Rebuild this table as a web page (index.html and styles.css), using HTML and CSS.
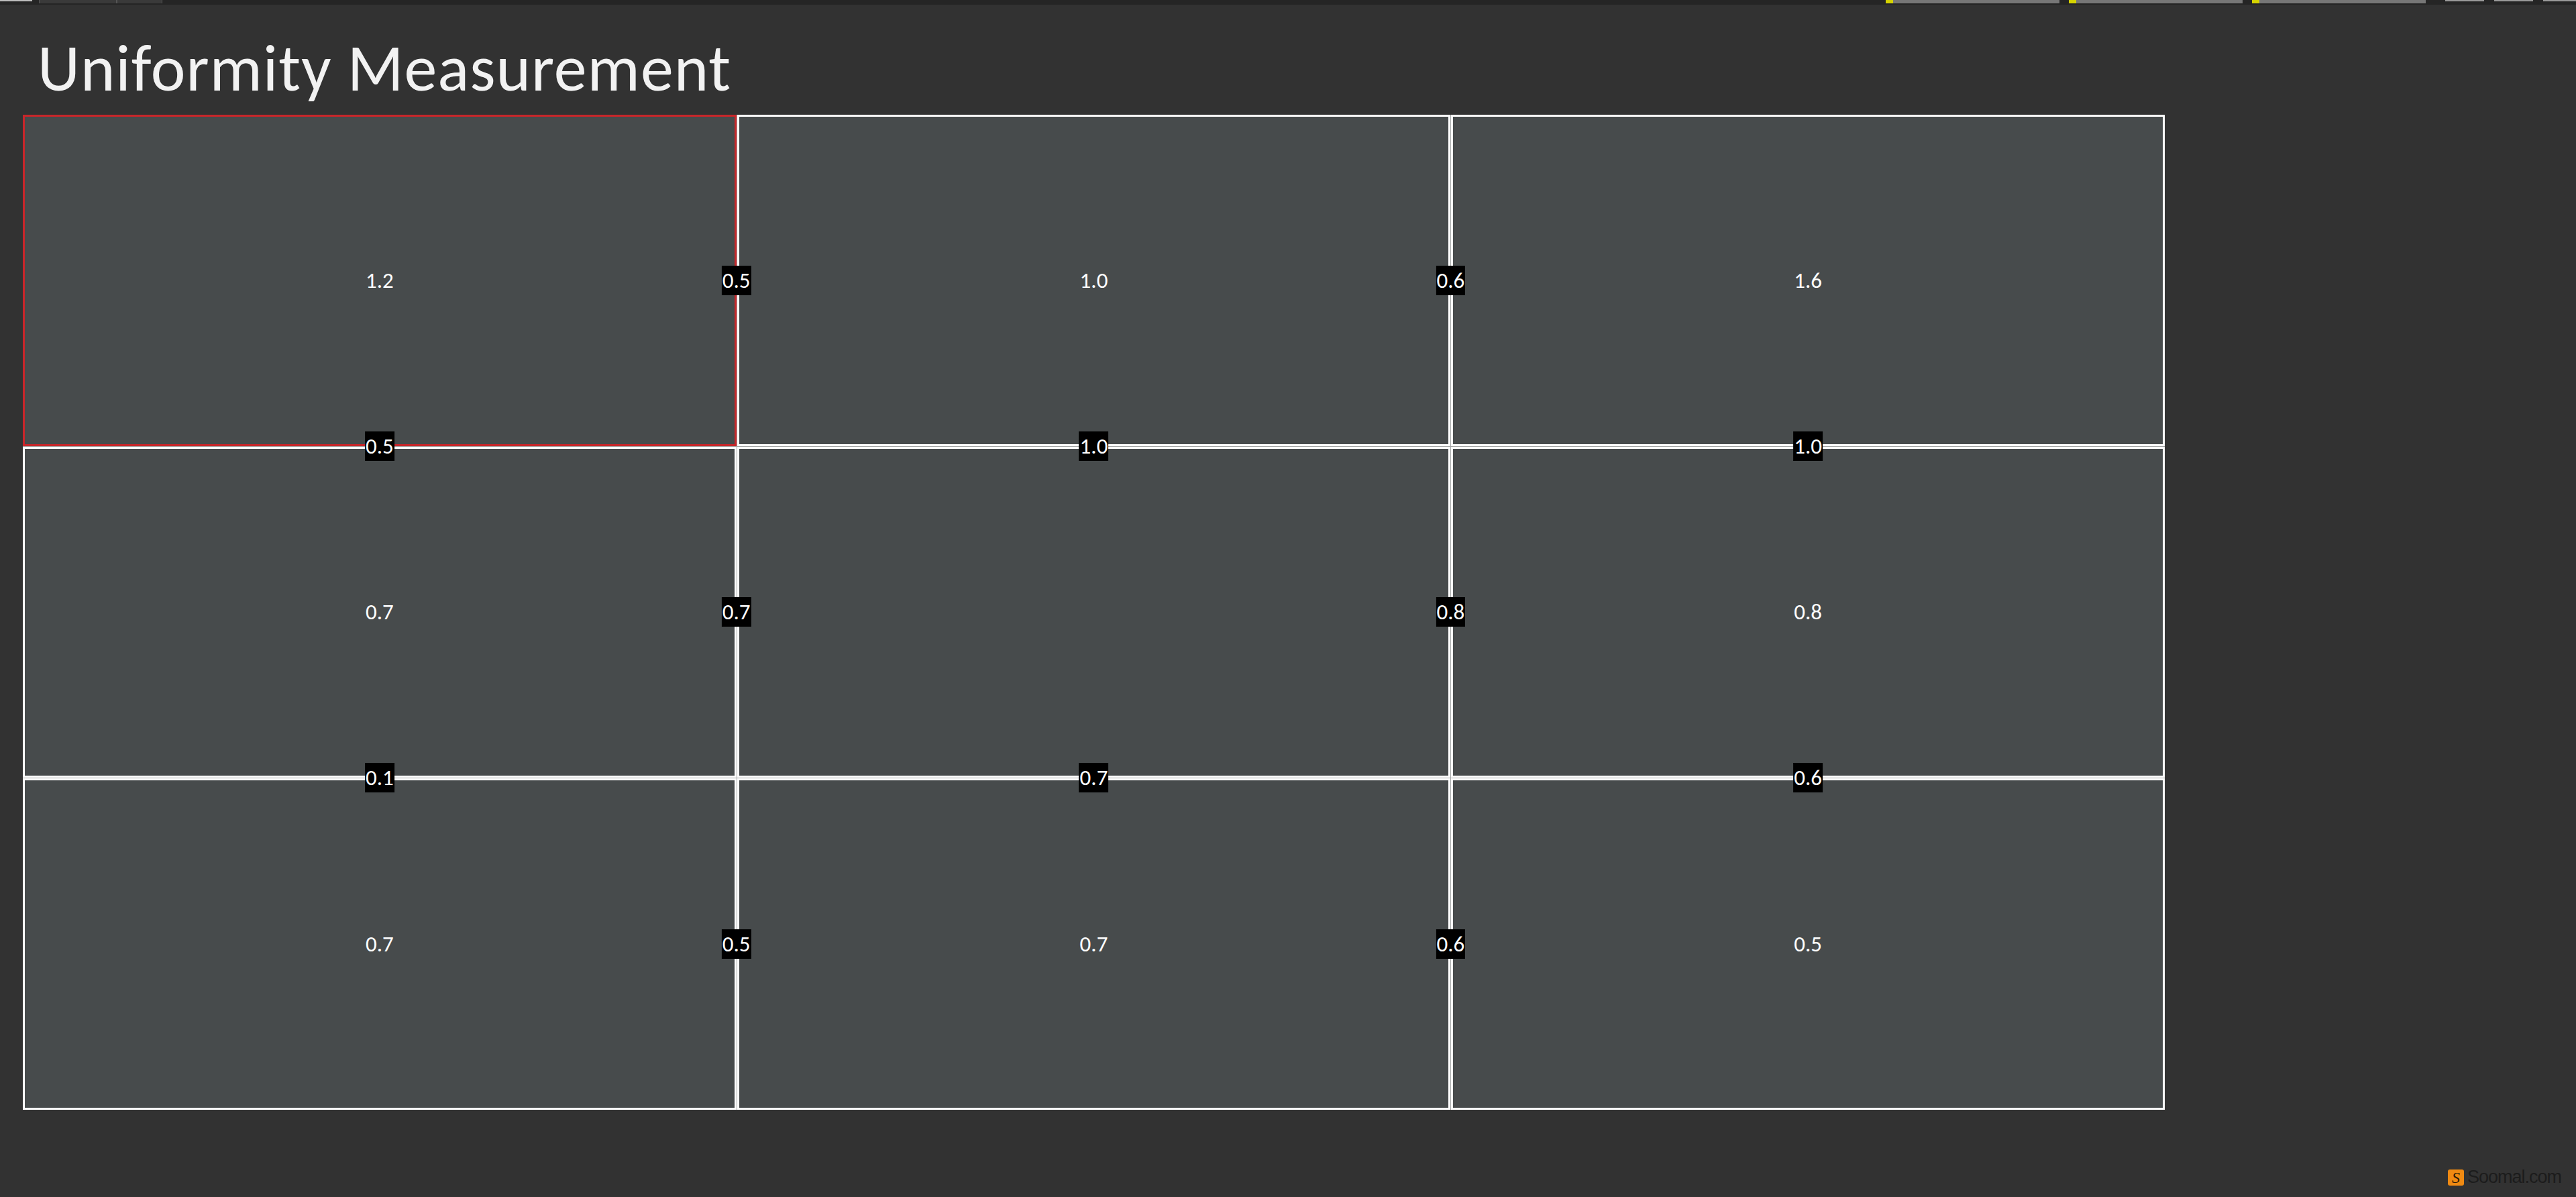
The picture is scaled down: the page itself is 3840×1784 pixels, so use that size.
FILE: index.html
```html
<!DOCTYPE html>
<html lang="en">
<head>
  <meta charset="UTF-8">
  <title>Uniformity Measurement</title>
  <meta name="viewport" content="width=device-width, initial-scale=1.0">
  <link rel="stylesheet" href="styles.css">
</head>
<body>
  <div class="topbar">
    <span class="tab tab-first"></span>
    <span class="tab tab-a"></span>
    <span class="tab tab-b"></span>
    <span class="spacer"></span>
    <span class="slot"><i></i></span>
    <span class="slot"><i></i></span>
    <span class="slot"><i></i></span>
    <span class="win"></span>
    <span class="win"></span>
    <span class="win last"></span>
  </div>

  <div class="main">
    <h1 class="title">Uniformity Measurement</h1>

    <div class="grid">
      <div class="cell active">
        <span class="value">1.2</span>
        <span class="tag tag-right">0.5</span>
        <span class="tag tag-bottom">0.5</span>
      </div>
      <div class="cell">
        <span class="value">1.0</span>
        <span class="tag tag-right">0.6</span>
        <span class="tag tag-bottom">1.0</span>
      </div>
      <div class="cell">
        <span class="value">1.6</span>
        <span class="tag tag-bottom">1.0</span>
      </div>

      <div class="cell">
        <span class="value">0.7</span>
        <span class="tag tag-right">0.7</span>
        <span class="tag tag-bottom">0.1</span>
      </div>
      <div class="cell">
        <span class="value"></span>
        <span class="tag tag-right">0.8</span>
        <span class="tag tag-bottom">0.7</span>
      </div>
      <div class="cell">
        <span class="value">0.8</span>
        <span class="tag tag-bottom">0.6</span>
      </div>

      <div class="cell">
        <span class="value">0.7</span>
        <span class="tag tag-right">0.5</span>
      </div>
      <div class="cell">
        <span class="value">0.7</span>
        <span class="tag tag-right">0.6</span>
      </div>
      <div class="cell">
        <span class="value">0.5</span>
      </div>
    </div>

    <div class="footer">
      <span class="logo-mark">S</span>
      <span class="logo-text">Soomal.com</span>
    </div>
  </div>
</body>
</html>
```

FILE: styles.css
```css
:root {
  --bg: #323232;
  --bar: #252525;
  --cell: #474b4c;
  --line: #ffffff;
  --active: #c8262a;
  --text: #ffffff;
}

* {
  box-sizing: border-box;
}

body {
  margin: 0;
  background: var(--bg);
  color: var(--text);
  font-family: Carlito, Calibri, Lato, 'Open Sans', sans-serif;
  width: 3840px;
  height: 1784px;
  overflow: hidden;
}

/* strip of tabs along the top edge */
.topbar {
  display: flex;
  align-items: flex-start;
  height: 7px;
  background: var(--bar);
}

.tab {
  height: 5px;
  background: #3a3a3a;
  border-left: 1px solid #555;
  border-right: 1px solid #555;
}

.tab-first {
  width: 48px;
  height: 2px;
  background: #bdbdbd;
  border: none;
}

.tab-a {
  width: 116px;
  margin-left: 10px;
}

.tab-b {
  width: 68px;
}

.spacer {
  flex: 1;
}

.slot {
  display: flex;
  width: 259px;
  height: 5px;
  margin-right: 14px;
  background: #777777;
}

.slot i {
  width: 11px;
  height: 5px;
  background: #d6d400;
}

.win {
  width: 58px;
  height: 2px;
  margin-left: 15px;
  background: #9a9a9a;
}

.win.last {
  width: 49px;
}

.main {
  padding-left: 34px;
  border-left: 2px solid #2a2a2a;
  margin-left: -2px;
}

.title {
  margin: 45px 0 19px 22px;
  font-size: 98px;
  font-weight: normal;
  line-height: 100px;
  color: #f2f2f2;
  letter-spacing: 1px;
}

.grid {
  display: grid;
  grid-template-columns: repeat(3, 1fr);
  grid-template-rows: repeat(3, 1fr);
  gap: 1px;
  width: 3193px;
  height: 1483px;
  background: #a4a6a6;
}

.cell {
  position: relative;
  display: flex;
  align-items: center;
  justify-content: center;
  background: var(--cell);
  border: 3px solid var(--line);
}

.cell.active {
  border-color: var(--active);
}

.value {
  font-size: 33px;
  line-height: 44px;
}

.tag {
  position: absolute;
  z-index: 1;
  padding: 0 1px;
  background: #000;
  font-size: 33px;
  line-height: 44px;
}

.tag-right {
  top: 50%;
  right: -3px;
  transform: translate(50%, -50%);
}

.tag-bottom {
  left: 50%;
  bottom: -3px;
  transform: translate(-50%, 50%);
}

.footer {
  display: flex;
  align-items: center;
  justify-content: flex-end;
  gap: 5px;
  margin-top: 85px;
  padding-right: 22px;
}

.logo-mark {
  width: 24px;
  height: 24px;
  border-radius: 3px;
  background: #f08a12;
  color: #2a1a08;
  font-family: 'Liberation Serif', serif;
  font-style: italic;
  font-size: 24px;
  line-height: 24px;
  text-align: center;
}

.logo-text {
  font-family: 'Liberation Sans', sans-serif;
  font-size: 27px;
  letter-spacing: -1px;
  color: #1c1c1c;
}
```
